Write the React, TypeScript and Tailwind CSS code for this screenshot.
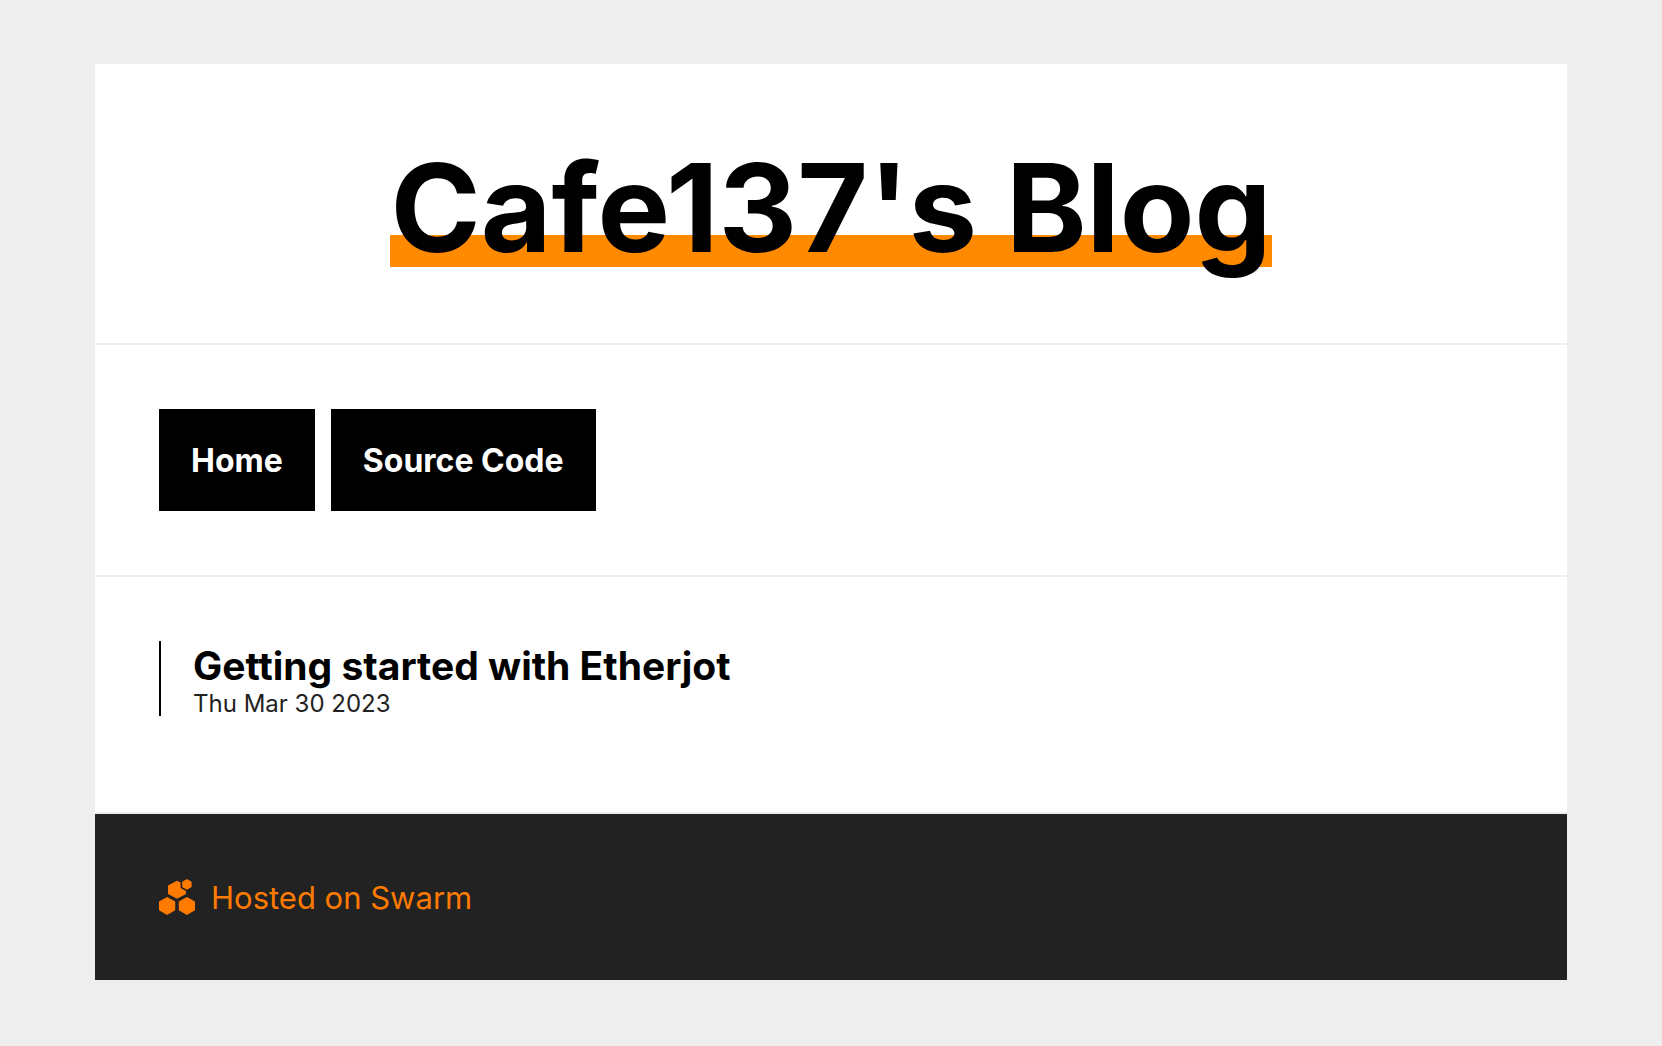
function SwarmLogo() {
  return (
    <svg className="size-9 shrink-0" viewBox="0 0 36 36" fill="currentColor" aria-hidden="true">
      <path d="M8.1 18 16.2 22.6V31.3L8.1 36 0 31.3V22.6Z" />
      <path d="M27.9 18 36 22.6V31.3L27.9 36 19.8 31.3V22.6Z" />
      <path d="M18 1.8 21.6 3.6V8.9L27 12V15.1L18 19.8 9 15.1V6.4Z" />
      <path d="M27.9 0 32.6 2.7V8.1L27.9 10.8 23.2 8.1V2.7Z" />
    </svg>
  );
}

const links = ["Home", "Source Code"];

export default function App() {
  return (
    <div className="min-h-screen bg-[#eeeeee] px-4 py-16 font-['Inter',sans-serif] text-black">
      <div className="mx-auto w-full max-w-[1472px] bg-white">
        <header className="border-b-2 border-[#eeeeee] px-16 pt-[68px] pb-[60px] text-center">
          <h1 className="text-[122px] leading-[151px] font-bold">
            <span className="inline-block bg-[linear-gradient(#ff8a00,#ff8a00)] bg-[length:100%_32px] bg-[position:0_103px] bg-no-repeat">
              Cafe137's Blog
            </span>
          </h1>
        </header>
        <nav className="flex flex-wrap gap-4 border-b-2 border-[#eeeeee] p-16">
          {links.map((label) => (
            <a key={label} href="#" className="bg-black px-8 pt-8 pb-[30px] text-[32px] leading-[40px] font-bold text-white">
              {label}
            </a>
          ))}
        </nav>
        <main className="border-b-2 border-[#eeeeee] p-16">
          <article className="mb-8 border-l-2 border-black pl-8">
            <h2 className="text-[39px] leading-[50px] font-bold">
              <a href="#">Getting started with Etherjot</a>
            </h2>
            <p className="text-2xl leading-[25px] text-[#222222]">Thu Mar 30 2023</p>
          </article>
        </main>
        <footer className="bg-[#222222] px-16 pt-16 pb-[62px]">
          <a href="#" className="flex items-start gap-4 text-[31px] leading-[40px] text-[#ff7a00]">
            <span className="pt-px">
              <SwarmLogo />
            </span>
            Hosted on Swarm
          </a>
        </footer>
      </div>
    </div>
  );
}
